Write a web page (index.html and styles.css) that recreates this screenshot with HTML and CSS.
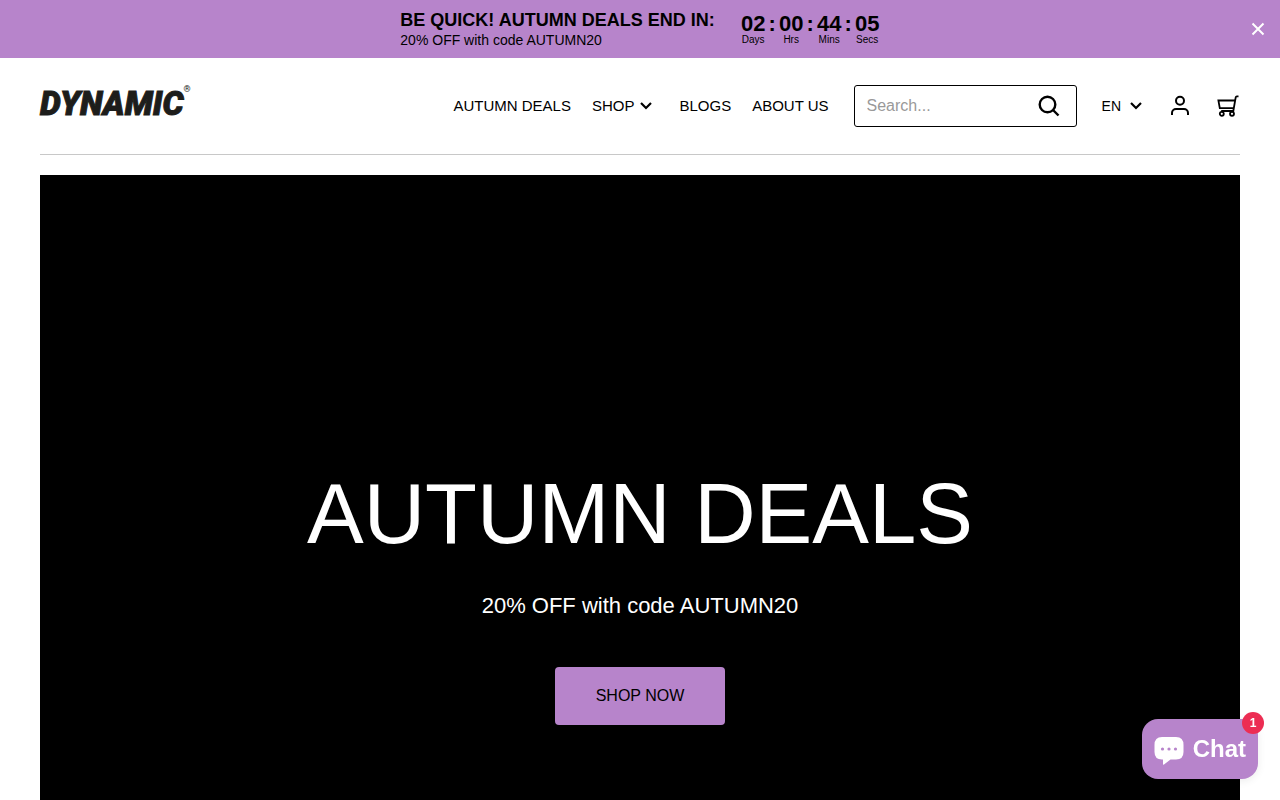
FILE: index.html
```html
<!DOCTYPE html>
<html lang="en">
<head>
  <meta charset="UTF-8">
  <meta name="viewport" content="width=device-width, initial-scale=1.0">
  <title>Dynamic</title>
  <link rel="stylesheet" href="styles.css">
</head>
<body>
  <div class="promo">
    <div class="promo-text">
      <p class="promo-title">BE QUICK! AUTUMN DEALS END IN:</p>
      <p class="promo-code">20% OFF with code AUTUMN20</p>
    </div>
    <div class="countdown">
      <div class="unit"><span class="num">02</span><span class="label">Days</span></div>
      <span class="colon">:</span>
      <div class="unit"><span class="num">00</span><span class="label">Hrs</span></div>
      <span class="colon">:</span>
      <div class="unit"><span class="num">44</span><span class="label">Mins</span></div>
      <span class="colon">:</span>
      <div class="unit"><span class="num">05</span><span class="label">Secs</span></div>
    </div>
    <button class="promo-close" aria-label="Close">
      <svg viewBox="0 0 14 14" fill="none" stroke="currentColor" stroke-width="2">
        <path d="M1.5 1.5l11 11M12.5 1.5l-11 11"/>
      </svg>
    </button>
  </div>

  <header class="header">
    <a class="logo" href="#">DYNAMIC<span class="reg">®</span></a>
    <nav class="nav">
      <a href="#">AUTUMN DEALS</a>
      <a href="#" class="has-menu">SHOP
        <svg class="chevron" viewBox="0 0 12 8" fill="none" stroke="currentColor" stroke-width="2.2">
          <path d="M1 1l5 5 5-5"/>
        </svg>
      </a>
      <a href="#">BLOGS</a>
      <a href="#">ABOUT US</a>
    </nav>
    <form class="search">
      <input type="search" placeholder="Search..." aria-label="Search">
      <button type="submit" aria-label="Search">
        <svg viewBox="0 0 22 22" fill="none" stroke="currentColor" stroke-width="2.4">
          <circle cx="9.5" cy="9.5" r="7.8"/>
          <path d="M15 15l5.500 5.500"/>
        </svg>
      </button>
    </form>
    <button class="lang">EN
      <svg class="chevron" viewBox="0 0 12 8" fill="none" stroke="currentColor" stroke-width="2.2">
        <path d="M1 1l5 5 5-5"/>
      </svg>
    </button>
    <a class="icon account" href="#" aria-label="Account">
      <svg viewBox="0 0 22 22" fill="none" stroke="currentColor" stroke-width="2">
        <circle cx="11" cy="5.800" r="4"/>
        <path d="M3 20v-2a4 4 0 0 1 4-4h8a4 4 0 0 1 4 4v2"/>
      </svg>
    </a>
    <a class="icon cart" href="#" aria-label="Cart">
      <svg viewBox="0 0 22 22" fill="none" stroke="currentColor" stroke-width="1.8">
        <path d="M21.500 1.400h-1.600q-1 0-1.200 1L16.300 16H4.200"/>
        <path d="M18 5.500H1.400l1.400 7.700h13.800"/>
        <circle cx="4.800" cy="18.800" r="2"/>
        <circle cx="15" cy="18.800" r="2"/>
      </svg>
    </a>
  </header>

  <main class="hero">
    <h1>AUTUMN DEALS</h1>
    <p>20% OFF with code AUTUMN20</p>
    <a class="shop-now" href="#">SHOP NOW</a>
  </main>

  <button class="chat">
    <svg viewBox="0 0 30 30">
      <path fill="#fff" d="M8 3h14q7.500 0 7.500 8v7q0 7.500-7.500 7.500h-5.500l-6.500 5q-1 .6-1-.6v-4.400h-1Q.5 25.500 .5 18v-7Q.5 3 8 3z"/>
      <g fill="#b784cb">
        <circle cx="8.500" cy="15" r="1.600"/>
        <circle cx="15" cy="15" r="1.600"/>
        <circle cx="21.500" cy="15" r="1.600"/>
      </g>
    </svg>
    Chat
    <span class="badge">1</span>
  </button>
</body>
</html>
```
FILE: styles.css
```css
* {
  margin: 0;
  padding: 0;
  box-sizing: border-box;
}

body {
  font-family: "Liberation Sans", Arial, sans-serif;
  color: #000;
  background: #fff;
  min-height: 100vh;
  display: flex;
  flex-direction: column;
}

a {
  color: inherit;
  text-decoration: none;
}

button {
  font-family: inherit;
  color: inherit;
  background: transparent;
  border: none;
  cursor: pointer;
}

svg {
  display: block;
  flex-shrink: 0;
  overflow: visible;
}

/* promo bar */
.promo {
  position: relative;
  display: flex;
  align-items: center;
  justify-content: center;
  gap: 26px;
  padding: 9px 40px;
  background: #b784cb;
}

.promo-title {
  font-size: 18px;
  line-height: 22px;
  font-weight: bold;
}

.promo-code {
  font-size: 14px;
  line-height: 18px;
}

.countdown {
  display: flex;
  align-items: flex-start;
}

.unit {
  display: flex;
  flex-direction: column;
  align-items: center;
  width: 25px;
}

.num,
.colon {
  font-size: 22px;
  line-height: 22px;
  font-weight: bold;
}

.colon {
  width: 13px;
  text-align: center;
}

.label {
  font-size: 10px;
  line-height: 10px;
}

.promo-close {
  position: absolute;
  top: 22px;
  right: 15px;
  color: #fff;
}

.promo-close svg {
  width: 14px;
  height: 14px;
}

/* header */
.header {
  display: flex;
  align-items: center;
  margin: 0 40px 20px;
  padding: 27px 0;
  border-bottom: 1px solid #c8c8c8;
}

.logo {
  display: flex;
  align-items: flex-start;
  margin-right: auto;
  padding-bottom: 4px;
  font-family: Roboto, "Liberation Sans", sans-serif;
  font-size: 33px;
  line-height: 38px;
  font-weight: 900;
  font-style: italic;
  color: #1d1d1b;
  -webkit-text-stroke: 1px #1d1d1b;
}

.reg {
  font-size: 9px;
  line-height: 9px;
  font-weight: 400;
  font-style: normal;
  -webkit-text-stroke: 0;
}

.nav {
  display: flex;
  align-items: center;
  gap: 21px;
  font-size: 15px;
  line-height: 20px;
}

.has-menu {
  display: flex;
  align-items: center;
  gap: 6px;
  padding-right: 6px;
}

.chevron {
  width: 12px;
  height: 8px;
}

.search {
  display: flex;
  align-items: center;
  width: 223px;
  height: 42px;
  margin-left: 25px;
  padding: 0 16px 0 12px;
  border: 1px solid #000;
  border-radius: 3px;
}

.search input {
  flex: 1;
  min-width: 0;
  font-family: inherit;
  font-size: 16px;
  border: none;
  outline: none;
  background: transparent;
}

.search input::placeholder {
  color: #999;
}

.search svg {
  width: 22px;
  height: 22px;
}

.lang {
  display: flex;
  align-items: center;
  gap: 9px;
  margin-left: 25px;
  font-size: 14px;
  line-height: 20px;
}

.icon svg {
  width: 22px;
  height: 22px;
}

.account {
  margin-left: 27px;
}

.cart {
  margin: 0 1px 0 26px;
}

/* hero */
.hero {
  flex: 1;
  display: flex;
  flex-direction: column;
  align-items: center;
  justify-content: flex-end;
  margin: 0 40px;
  padding: 280px 20px 75px;
  background: #000;
  color: #fff;
  text-align: center;
}

.hero h1 {
  font-size: 85px;
  line-height: 100px;
  font-weight: 400;
}

.hero p {
  margin: 29px 0 48px;
  font-size: 22px;
  line-height: 26px;
}

.shop-now {
  padding: 20px 41px;
  border-radius: 4px;
  background: #b784cb;
  color: #000;
  font-size: 16px;
  line-height: 18px;
}

/* chat launcher */
.chat {
  position: fixed;
  right: 22px;
  bottom: 21px;
  display: flex;
  align-items: center;
  gap: 9px;
  height: 60px;
  padding: 0 12px;
  border-radius: 16px;
  background: #b784cb;
  box-shadow: 0 2px 8px rgba(0, 0, 0, 0.08);
  color: #fff;
  font-size: 24px;
  font-weight: bold;
}

.chat svg {
  width: 30px;
  height: 30px;
}

.badge {
  position: absolute;
  top: -7px;
  right: -6px;
  width: 22px;
  height: 22px;
  border-radius: 50%;
  background: #ec2d53;
  font-size: 12px;
  line-height: 22px;
  text-align: center;
}
```
